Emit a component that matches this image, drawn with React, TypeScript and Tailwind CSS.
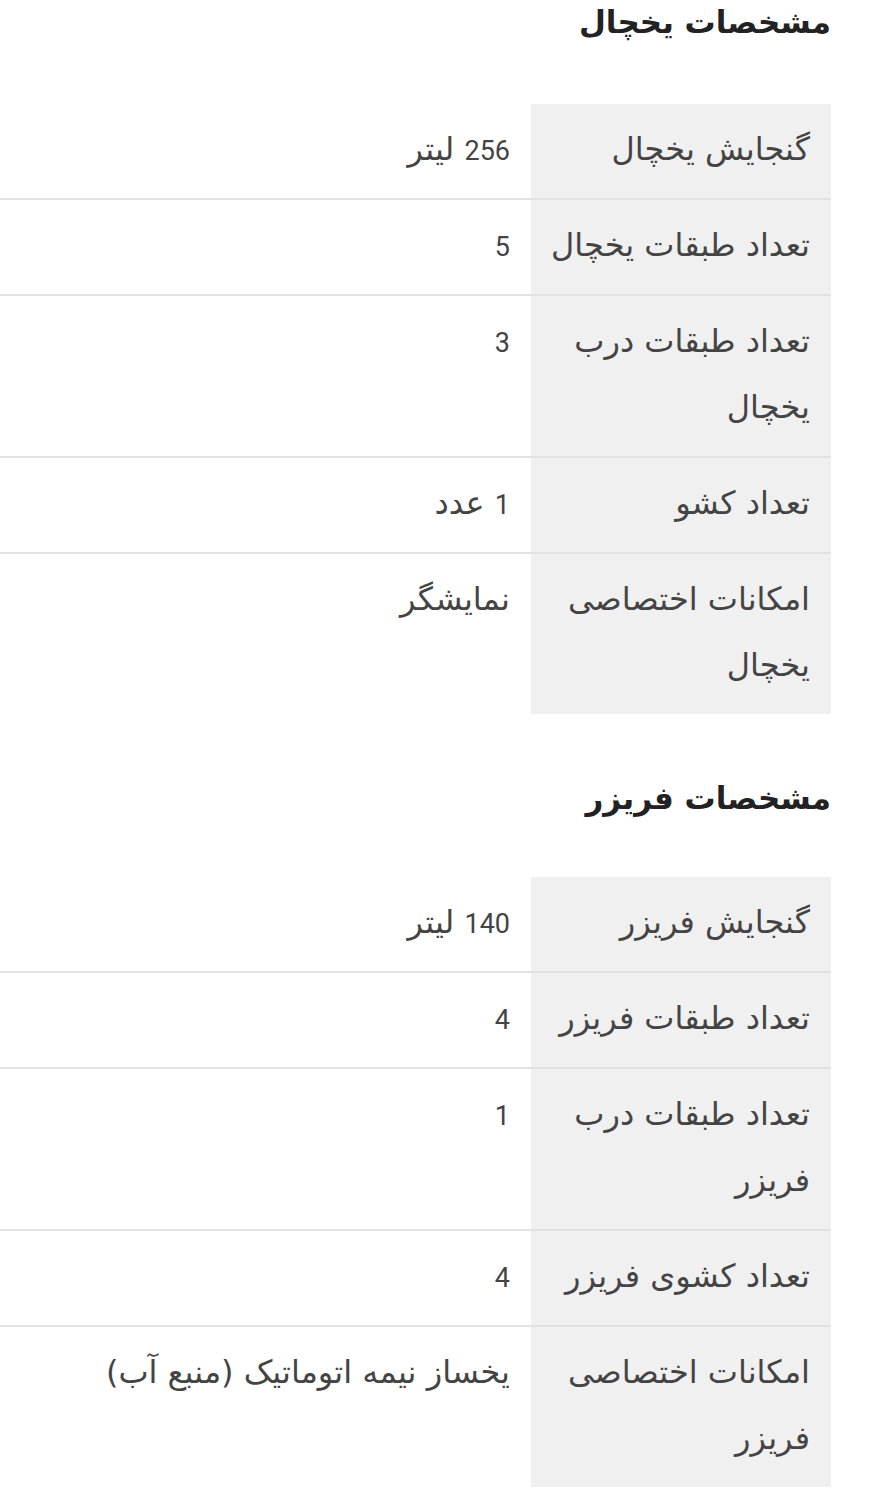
const fridgeSpecs = [
  { label: "گنجایش یخچال", value: "256 لیتر" },
  { label: "تعداد طبقات یخچال", value: "5" },
  { label: "تعداد طبقات درب یخچال", value: "3" },
  { label: "تعداد کشو", value: "1 عدد" },
  { label: "امکانات اختصاصی یخچال", value: "نمایشگر" },
];

const freezerSpecs = [
  { label: "گنجایش فریزر", value: "140 لیتر" },
  { label: "تعداد طبقات فریزر", value: "4" },
  { label: "تعداد طبقات درب فریزر", value: "1" },
  { label: "تعداد کشوی فریزر", value: "4" },
  { label: "امکانات اختصاصی فریزر", value: "یخساز نیمه اتوماتیک (منبع آب)" },
];

type Spec = { label: string; value: string };

// digits use Roboto, persian text uses DejaVu
const Value = ({ text }: { text: string }) => (
  <>
    {text.split(/(\d+)/).map((part, i) =>
      /^\d+$/.test(part) ? (
        <span key={i} className="font-['Roboto'] text-[27px] leading-none">
          {part}
        </span>
      ) : (
        <span key={i}>{part}</span>
      )
    )}
  </>
);

const SpecTable = ({ title, rows, first }: { title: string; rows: Spec[]; first?: boolean }) => {
  return (
    <section className={first ? "" : "mt-[62px]"}>
      <h2 className="text-[31px] font-bold leading-[44px] text-[#222]">{title}</h2>
      <div className={`flex flex-col ${first ? "mt-[60px]" : "mt-[57px]"}`}>
        {rows.map((row, i) => (
          <div
            key={row.label}
            className={`flex ${i < rows.length - 1 ? "border-b-2 border-[#e2e2e2]" : ""}`}
          >
            <div className="w-[300px] shrink-0 bg-[#f0f0f0] pt-[12px] pb-[16px] pl-[14px] pr-[21px] text-[32px] leading-[66px] text-[#444]">
              {row.label}
            </div>
            <div className="flex-1 pt-[12px] pb-[16px] pr-[21px] text-[32px] leading-[66px] text-[#444]">
              <Value text={row.value} />
            </div>
          </div>
        ))}
      </div>
    </section>
  );
};

export default function App() {
  return (
    <div
      dir="rtl"
      className="w-[870px] bg-white pr-[39px]"
      style={{ fontFamily: "'DejaVu Sans', sans-serif" }}
    >
      <SpecTable title="مشخصات یخچال" rows={fridgeSpecs} first />
      <SpecTable title="مشخصات فریزر" rows={freezerSpecs} />
    </div>
  );
}
